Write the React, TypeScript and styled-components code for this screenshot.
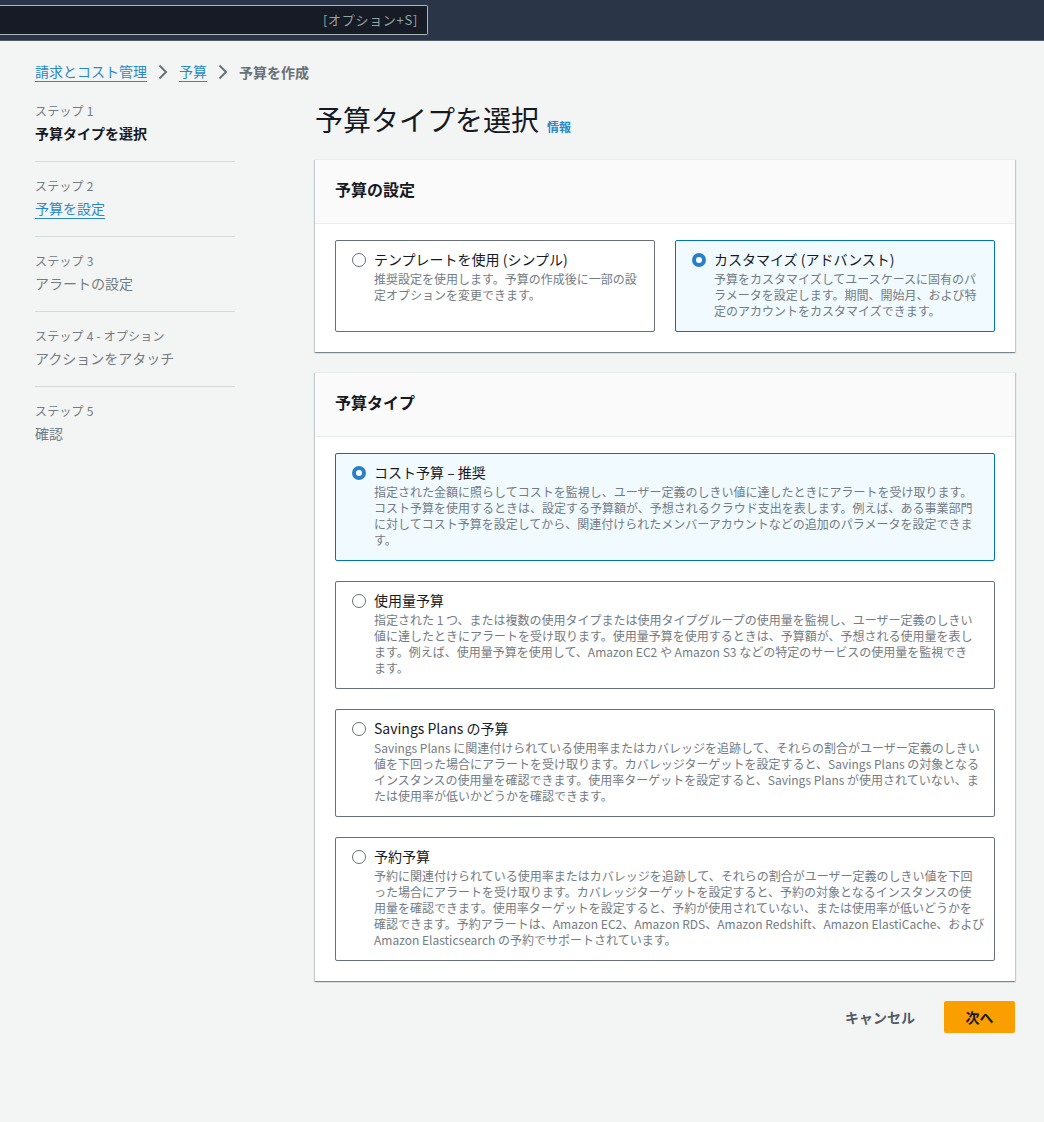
import styled, { createGlobalStyle } from 'styled-components'

const fontStack = '"Noto Sans CJK JP", "Noto Sans", sans-serif'

const GlobalStyle = createGlobalStyle`
    html, body {
        margin: 0;
        padding: 0;
        background: #f3f5f5;
    }
    body {
        font-family: ${fontStack};
        color: #16191f;
    }
`

const Page = styled.div`
    width: 1044px;
    height: 1122px;
    overflow: hidden;
    background: #f3f5f5;
`

const TopNav = styled.header`
    display: flex;
    align-items: flex-start;
    box-sizing: border-box;
    height: 41px;
    padding-top: 5px;
    background: #2a3547;
    border-bottom: 1px solid #545b64;
`

const SearchBox = styled.div`
    display: flex;
    align-items: center;
    justify-content: flex-end;
    box-sizing: border-box;
    width: 428px;
    height: 30px;
    padding: 0 9px 1px 0;
    background: #161b26;
    border: 1px solid #aab7b8;
    border-left: none;
    border-radius: 0 2px 2px 0;
    color: #95a5a6;
    font-size: 13px;
    letter-spacing: 0.7px;
`

const Content = styled.div`
    padding: 21px 29px 0 35px;
`

const Breadcrumbs = styled.nav`
    display: flex;
    align-items: center;
    height: 20px;
    font-size: 14px;
`

const CrumbLink = styled.a`
    color: #2b87c9;
    line-height: 19px;
    border-bottom: 1px solid #2b87c9;
`

const CrumbCurrent = styled.span`
    color: #687078;
    font-size: 14px;
    font-weight: 700;
`

const CrumbArrow = styled.svg`
    display: block;
    width: 16px;
    height: 16px;
    margin: 0 8px;
    fill: none;
    stroke: #687078;
    stroke-width: 2;
`

const Layout = styled.div`
    display: grid;
    grid-template-columns: 200px 700px;
    column-gap: 80px;
    margin-top: 5px;
`

const StepList = styled.ol`
    margin: 0;
    padding: 0;
    list-style: none;
`

const Step = styled.li`
    box-sizing: border-box;
    height: 75px;
    padding-top: 16px;
    border-bottom: 1px solid #d5dbdb;
    &:last-child {
        border-bottom: none;
    }
`

const StepLabel = styled.div`
    height: 16px;
    color: #737b83;
    font-size: 12px;
    line-height: 16px;
    letter-spacing: 0.2px;
`

const StepTitle = styled.div<{ $state: 'current' | 'link' | 'idle' }>`
    margin-top: 3px;
    font-size: 14px;
    line-height: 22px;
    font-weight: ${(p) => (p.$state === 'current' ? 700 : 400)};
    color: ${(p) =>
        p.$state === 'current'
            ? '#16191f'
            : p.$state === 'link'
              ? '#2b87c9'
              : '#737b83'};
`

const StepLink = styled.a`
    display: inline-block;
    line-height: 19px;
    border-bottom: 1px solid #2b87c9;
`

const Main = styled.main`
    display: flex;
    flex-direction: column;
    padding-top: 12px;
`

const PageHeading = styled.div`
    display: flex;
    height: 40px;
    margin-bottom: 20px;
`

const Title = styled.h1`
    margin: 0;
    font-size: 28px;
    line-height: 40px;
    font-weight: 400;
    color: #16191f;
`

const InfoLink = styled.a`
    align-self: flex-end;
    margin: 0 0 4px 8px;
    color: #2b87c9;
    font-size: 12px;
    line-height: 16px;
    font-weight: 700;
`

const Card = styled.section`
    background: #fff;
    box-shadow:
        0 1px 1px 0 rgba(0, 28, 36, 0.3),
        1px 1px 1px 0 rgba(0, 28, 36, 0.15),
        -1px 1px 1px 0 rgba(0, 28, 36, 0.15);
    border-top: 1px solid #eaeded;
    margin-bottom: 20px;
`

const CardHeader = styled.div`
    box-sizing: border-box;
    height: 64px;
    padding: 17px 20px 0;
    background: #fafafa;
    border-bottom: 1px solid #eaeded;
`

const CardTitle = styled.h2`
    margin: 0;
    font-size: 16px;
    line-height: 24px;
    font-weight: 700;
    color: #16191f;
`

const CardBody = styled.div`
    padding: 16px 20px 20px;
`

const OptionRow = styled.div`
    display: grid;
    grid-template-columns: 1fr 1fr;
    column-gap: 20px;
`

const OptionStack = styled.div`
    display: flex;
    flex-direction: column;
    gap: 20px;
`

const Option = styled.label<{ $selected?: boolean }>`
    display: flex;
    box-sizing: border-box;
    min-height: 92px;
    padding: 8px 16px 12px;
    gap: 8px;
    border: 1px solid ${(p) => (p.$selected ? '#0073bb' : '#687078')};
    border-radius: 2px;
    background: ${(p) => (p.$selected ? '#f1faff' : '#fff')};
`

const Radio = styled.span<{ $selected?: boolean }>`
    flex: none;
    box-sizing: border-box;
    width: 14px;
    height: 14px;
    margin-top: 4px;
    border-radius: 50%;
    background: #fff;
    border: ${(p) => (p.$selected ? '4px solid #2a7fc9' : '1px solid #687078')};
`

const OptionText = styled.div`
    min-width: 0;
`

const OptionTitle = styled.div`
    margin-bottom: 2px;
    font-size: 14px;
    line-height: 20px;
    color: #16191f;
`

const OptionLine = styled.div`
    font-size: 12px;
    line-height: 16px;
    color: #737b83;
    white-space: nowrap;
`

const Actions = styled.div`
    display: flex;
    justify-content: flex-end;
    align-items: center;
    gap: 29px;
`

const CancelButton = styled.button`
    padding: 0;
    border: none;
    background: none;
    color: #545b64;
    font: 700 14px ${fontStack};
`

const NextButton = styled.button`
    box-sizing: border-box;
    width: 71px;
    height: 32px;
    border: none;
    border-radius: 2px;
    background: #fb9f00;
    color: #16191f;
    font: 700 14px ${fontStack};
`

const steps = [
    { label: 'ステップ 1', title: '予算タイプを選択', state: 'current' },
    { label: 'ステップ 2', title: '予算を設定', state: 'link' },
    { label: 'ステップ 3', title: 'アラートの設定', state: 'idle' },
    { label: 'ステップ 4 - オプション', title: 'アクションをアタッチ', state: 'idle' },
    { label: 'ステップ 5', title: '確認', state: 'idle' },
] as const

const setupOptions = [
    {
        title: 'テンプレートを使用 (シンプル)',
        lines: [
            '推奨設定を使用します。予算の作成後に一部の設',
            '定オプションを変更できます。',
        ],
    },
    {
        title: 'カスタマイズ (アドバンスト)',
        selected: true,
        lines: [
            '予算をカスタマイズしてユースケースに固有のパ',
            'ラメータを設定します。期間、開始月、および特',
            '定のアカウントをカスタマイズできます。',
        ],
    },
]

const typeOptions = [
    {
        title: 'コスト予算 – 推奨',
        selected: true,
        lines: [
            '指定された金額に照らしてコストを監視し、ユーザー定義のしきい値に達したときにアラートを受け取ります。',
            'コスト予算を使用するときは、設定する予算額が、予想されるクラウド支出を表します。例えば、ある事業部門',
            'に対してコスト予算を設定してから、関連付けられたメンバーアカウントなどの追加のパラメータを設定できま',
            'す。',
        ],
    },
    {
        title: '使用量予算',
        lines: [
            '指定された 1 つ、または複数の使用タイプまたは使用タイプグループの使用量を監視し、ユーザー定義のしきい',
            '値に達したときにアラートを受け取ります。使用量予算を使用するときは、予算額が、予想される使用量を表し',
            'ます。例えば、使用量予算を使用して、Amazon EC2 や Amazon S3 などの特定のサービスの使用量を監視でき',
            'ます。',
        ],
    },
    {
        title: 'Savings Plans の予算',
        lines: [
            'Savings Plans に関連付けられている使用率またはカバレッジを追跡して、それらの割合がユーザー定義のしきい',
            '値を下回った場合にアラートを受け取ります。カバレッジターゲットを設定すると、Savings Plans の対象となる',
            'インスタンスの使用量を確認できます。使用率ターゲットを設定すると、Savings Plans が使用されていない、ま',
            'たは使用率が低いかどうかを確認できます。',
        ],
    },
    {
        title: '予約予算',
        lines: [
            '予約に関連付けられている使用率またはカバレッジを追跡して、それらの割合がユーザー定義のしきい値を下回',
            'った場合にアラートを受け取ります。カバレッジターゲットを設定すると、予約の対象となるインスタンスの使',
            '用量を確認できます。使用率ターゲットを設定すると、予約が使用されていない、または使用率が低いどうかを',
            '確認できます。予約アラートは、Amazon EC2、Amazon RDS、Amazon Redshift、Amazon ElastiCache、および',
            'Amazon Elasticsearch の予約でサポートされています。',
        ],
    },
]

type OptionData = { title: string; lines: string[]; selected?: boolean }

const OptionCard = ({ title, lines, selected }: OptionData) => (
    <Option $selected={selected}>
        <Radio $selected={selected} />
        <OptionText>
            <OptionTitle>{title}</OptionTitle>
            {lines.map((line) => (
                <OptionLine key={line}>{line}</OptionLine>
            ))}
        </OptionText>
    </Option>
)

const Arrow = () => (
    <CrumbArrow viewBox="0 0 16 16">
        <path d="M4.5 1.5 11 8l-6.5 6.5" />
    </CrumbArrow>
)

const App = () => (
    <Page>
        <GlobalStyle />
        <TopNav>
            <SearchBox>[オプション+S]</SearchBox>
        </TopNav>
        <Content>
            <Breadcrumbs>
                <CrumbLink>請求とコスト管理</CrumbLink>
                <Arrow />
                <CrumbLink>予算</CrumbLink>
                <Arrow />
                <CrumbCurrent>予算を作成</CrumbCurrent>
            </Breadcrumbs>
            <Layout>
                <StepList>
                    {steps.map((step) => (
                        <Step key={step.label}>
                            <StepLabel>{step.label}</StepLabel>
                            <StepTitle $state={step.state}>
                                {step.state === 'link' ? (
                                    <StepLink>{step.title}</StepLink>
                                ) : (
                                    step.title
                                )}
                            </StepTitle>
                        </Step>
                    ))}
                </StepList>
                <Main>
                    <PageHeading>
                        <Title>予算タイプを選択</Title>
                        <InfoLink>情報</InfoLink>
                    </PageHeading>
                    <Card>
                        <CardHeader>
                            <CardTitle>予算の設定</CardTitle>
                        </CardHeader>
                        <CardBody>
                            <OptionRow>
                                {setupOptions.map((option) => (
                                    <OptionCard key={option.title} {...option} />
                                ))}
                            </OptionRow>
                        </CardBody>
                    </Card>
                    <Card>
                        <CardHeader>
                            <CardTitle>予算タイプ</CardTitle>
                        </CardHeader>
                        <CardBody>
                            <OptionStack>
                                {typeOptions.map((option) => (
                                    <OptionCard key={option.title} {...option} />
                                ))}
                            </OptionStack>
                        </CardBody>
                    </Card>
                    <Actions>
                        <CancelButton>キャンセル</CancelButton>
                        <NextButton>次へ</NextButton>
                    </Actions>
                </Main>
            </Layout>
        </Content>
    </Page>
)

export default App
